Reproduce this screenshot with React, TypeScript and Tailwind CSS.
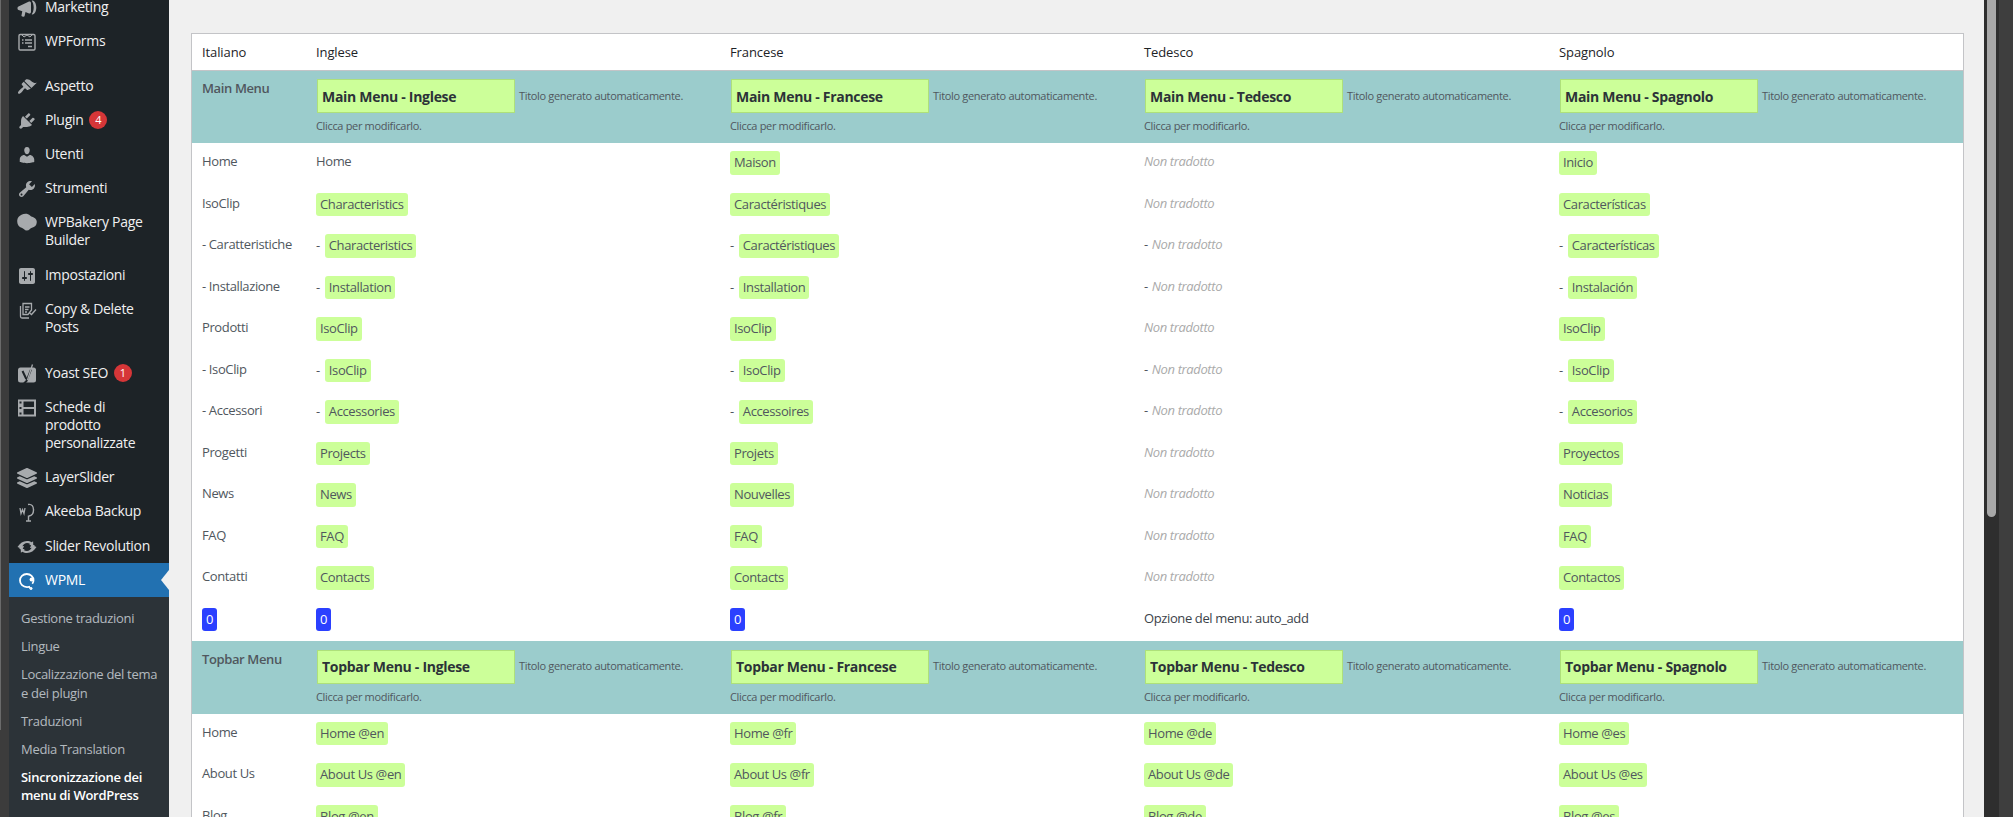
import React from "react";
import { FaLayerGroup } from "react-icons/fa";

const D: Record<string, string> = {
  appearance:
    "M14.48 11.06L7.41 3.99l1.5-1.5c.5-.56 2.3-.47 3.51.32 1.21.8 1.43 1.28 2.91 2.1 1.18.64 2.45 1.26 4.45.85zm-.71.71L6.7 4.7 4.93 6.47c-.39.39-.39 1.02 0 1.41l1.06 1.06c.39.39.39 1.03 0 1.42-.6.6-1.43 1.11-2.21 1.69-.35.26-.7.53-1.01.84-1.34 1.34-2.37 2.69-1.51 3.55s2.21-.17 3.55-1.51c.31-.31.58-.66.84-1.01.58-.78 1.09-1.61 1.69-2.21.39-.39 1.02-.39 1.41 0l1.06 1.06c.39.39 1.02.39 1.41 0z",
  plugin:
    "M13.11 4.36L9.87 7.6 8 5.73l3.24-3.24c.35-.34 1.05-.2 1.56.32.52.51.66 1.21.31 1.55zm-8 1.77l.91-1.12 9.01 9.01-1.19.84c-.71.71-2.63 1.16-3.82 1.16H6.14L4.9 17.26c-.59.59-1.54.59-2.12 0-.59-.58-.59-1.53 0-2.12l1.24-1.24v-3.88c0-1.13.4-3.19 1.09-3.89zm7.26 3.97l3.24-3.24c.34-.35 1.04-.21 1.55.31.52.51.66 1.21.31 1.55l-3.24 3.25z",
  users:
    "M10 9.25c-2.27 0-2.73-3.44-2.73-3.44C7 4.02 7.82 2 9.97 2c2.16 0 2.98 2.02 2.71 3.81 0 0-.41 3.44-2.68 3.44zm0 2.57L12.72 10c2.39 0 4.52 2.33 4.52 4.53v2.49s-3.65 1.13-7.24 1.13c-3.65 0-7.24-1.13-7.24-1.13v-2.49c0-2.25 1.94-4.48 4.47-4.48z",
  tools:
    "M16.68 9.77c-1.34 1.34-3.3 1.67-4.95.99l-5.41 6.52c-.99.99-2.59.99-3.58 0s-.99-2.59 0-3.57l6.52-5.42c-.68-1.65-.35-3.61.99-4.95 1.28-1.28 3.12-1.62 4.72-1.06l-2.89 2.89 2.82 2.82 2.86-2.87c.53 1.58.18 3.39-1.08 4.65zM3.81 16.21c.4.39 1.04.39 1.43 0 .4-.4.4-1.04 0-1.43-.39-.4-1.03-.4-1.43 0-.39.39-.39 1.03 0 1.43z",
  settings:
    "M18 16V4c0-1.1-.9-2-2-2H4c-1.1 0-2 .9-2 2v12c0 1.1.9 2 2 2h12c1.1 0 2-.9 2-2zM8 11h1c.55 0 1 .45 1 1s-.45 1-1 1H8v1.5c0 .28-.22.5-.5.5s-.5-.22-.5-.5V13H6c-.55 0-1-.45-1-1s.45-1 1-1h1V5.5c0-.28.22-.5.5-.5s.5.22.5.5V11zm5-2h-1c-.55 0-1-.45-1-1s.45-1 1-1h1V5.5c0-.28.22-.5.5-.5s.5.22.5.5V7h1c.55 0 1 .45 1 1s-.45 1-1 1h-1v5.5c0 .28-.22.5-.5.5s-.5-.22-.5-.5V9z",
  megaphone:
    "M1.500 8.500L12 3.500c1-.4 2 .3 2 1.400v9.200c0 1-1 1.800-2 1.400l-3.500-1.500-.9 4c-.1.500-.6.9-1.200.8l-1.200-.3c-.5-.1-.9-.7-.7-1.200l.8-4L1.500 12c-.6-.2-1-.7-1-1.400v-.7c0-.6.4-1.200 1-1.400zM15.500 2.500c1.900 0 3.800 3 3.800 7s-1.900 7-3.800 7c-.3 0-.6 0-.8-.2 1.100-1.300 2-3.900 2-6.800s-.9-5.500-2-6.800c.2-.2.5-.2.8-.2z",
  cloud:
    "M4.500 1.800c2-1 4.500-1.300 6.500-.6 1.700.6 2.400 1.900 4 2.500 2.400.8 4.800 2.300 4.800 5.300 0 3.300-2.200 5.200-4.800 5.700-1.800.4-2.600 2.800-5.300 2.800-2.300 0-3-2-5-2.700C2.500 14 .2 12.300.2 7.700.2 4.800 2.300 2.900 4.500 1.800z",
};

const Dash = ({ d, className = "" }: { d: string; className?: string }) => (
  <svg viewBox="0 0 20 20" className={"w-5 h-5 shrink-0 " + className} fill="currentColor">
    <path d={d} />
  </svg>
);

const WPFormsIcon = () => (
  <svg viewBox="0 0 20 20" className="w-5 h-5 shrink-0" fill="none" stroke="currentColor">
    <rect x="2" y="2.500" width="16" height="15.500" rx="1.200" strokeWidth="1.400" />
    <path d="M5 3l2 2 3-2 3 2 2-2" strokeWidth="1" />
    <path d="M5 8h1.500M8 8h7M5 11h1.500M8 11h7M11 14.500h4" strokeWidth="1.500" />
  </svg>
);
const CopyIcon = () => (
  <svg viewBox="0 0 20 20" className="w-5 h-5 shrink-0" fill="none" stroke="currentColor" strokeWidth="1.300">
    <path d="M6 3.500h8.500v6.500l-3.500 4.500H6z" />
    <path d="M3.500 6v10.500c0 1 .7 1.500 1.500 1.500h7" />
    <path d="M8 7h4.500M8 9.500h3.500M8 12h2" />
    <path d="M12.500 13l2 1.500 4.500-5" />
  </svg>
);
const YoastIcon = () => (
  <svg viewBox="0 0 20 20" className="w-5 h-5 shrink-0">
    <rect x="1" y="3.500" width="18" height="15" rx="2.500" fill="currentColor" />
    <path d="M5.500 7l3.800 8M14 5.500L9.500 17 7 19.500" fill="none" stroke="#1d2327" strokeWidth="2" />
    <path d="M15.500 0.500L10.500 16" fill="none" stroke="currentColor" strokeWidth="1.300" />
  </svg>
);
const FilmIcon = () => (
  <svg viewBox="0 0 20 20" className="w-5 h-5 shrink-0" fill="currentColor">
    <path
      fillRule="evenodd"
      d="M1 1.500h18v17H1zM6.500 3.500v5.500h10.500V3.500zM6.500 11v5.500h10.500V11zM2.500 3.500v2h2v-2zM2.500 9v2h2V9zM2.500 14.500v2h2v-2z"
    />
  </svg>
);
const AkeebaIcon = () => (
  <svg viewBox="0 0 20 20" className="w-5 h-5 shrink-0" fill="none" stroke="currentColor">
    <path d="M3 6l1 5.500 1.500-4 1.500 4 1-5.500" strokeWidth="1.300" />
    <path d="M11 2.500c4-.8 5.500 2 5.500 5.500s-1.500 5.500-4.500 6" strokeWidth="1.400" />
    <path d="M11.500 13.500V19M9 19h5" strokeWidth="1.400" />
  </svg>
);
const RevIcon = () => (
  <svg viewBox="0 0 20 20" className="w-5 h-5 shrink-0" fill="currentColor">
    <path d="M0.500 10C3 6.200 6 4 10 4c1.800 0 3.300.5 4.700 1.300l1.400-1.100.2 4.300-4.200-.5 1.200-1c-1-.6-2.100-.9-3.300-.9-2 0-3.800 1.300-4.600 3.200l1.700-.2L5 13.500 1.900 11l.9-.1zM19.500 10C17 13.800 14 16 10 16c-1.800 0-3.300-.5-4.700-1.300l-1.400 1.100-.2-4.300 4.200.5-1.200 1c1 .6 2.100.9 3.300.9 2 0 3.800-1.300 4.600-3.200l-1.700.2L15 6.500l3.100 2.500-.9.1z" />
  </svg>
);
const WpmlIcon = () => (
  <svg viewBox="0 0 20 20" className="w-5 h-5 shrink-0" fill="none" stroke="#fff" strokeWidth="1.800">
    <path d="M13 15.500c-1 .4-2 .6-3 .6-4 0-7-2.900-7-6.600C3 5.900 5.900 3 9.800 3c3.800 0 6.700 2.800 6.700 6.200 0 1.400-.4 2.600-1.200 3.600" />
    <circle cx="14.500" cy="8.500" r="1.900" fill="#fff" stroke="none" />
    <path d="M11.500 15.500c.8 1.500 2 2.300 3.500 1.800" strokeWidth="1.300" />
    <circle cx="14" cy="17.500" r="1.100" strokeWidth="1" />
  </svg>
);

type Item = { label: string; icon: React.ReactNode; badge?: string; after?: string };
const items: Item[] = [
  { label: "Marketing", icon: <Dash d={D.megaphone} /> },
  { label: "WPForms", icon: <WPFormsIcon />, after: "mb-[11px]" },
  { label: "Aspetto", icon: <Dash d={D.appearance} /> },
  { label: "Plugin", icon: <Dash d={D.plugin} />, badge: "4" },
  { label: "Utenti", icon: <Dash d={D.users} /> },
  { label: "Strumenti", icon: <Dash d={D.tools} /> },
  { label: "WPBakery Page Builder", icon: <Dash d={D.cloud} />, after: "mb-px" },
  { label: "Impostazioni", icon: <Dash d={D.settings} /> },
  { label: "Copy & Delete Posts", icon: <CopyIcon />, after: "mb-[12px]" },
  { label: "Yoast SEO", icon: <YoastIcon />, badge: "1" },
  { label: "Schede di prodotto personalizzate", icon: <FilmIcon /> },
  { label: "LayerSlider", icon: <FaLayerGroup className="w-5 h-5 shrink-0" /> },
  { label: "Akeeba Backup", icon: <AkeebaIcon />, after: "mb-px" },
  { label: "Slider Revolution", icon: <RevIcon /> },
];

const sub: { label: string; active?: boolean }[] = [
  { label: "Gestione traduzioni" },
  { label: "Lingue" },
  { label: "Localizzazione del tema e dei plugin" },
  { label: "Traduzioni" },
  { label: "Media Translation" },
  { label: "Sincronizzazione dei menu di WordPress", active: true },
];

const Sidebar = () => (
  <aside className="w-[160px] shrink-0 bg-[#1d2327] text-[14px] leading-[18px] tracking-[-0.3px] text-[#f0f0f1]">
    <ul className="-mt-[10px]">
      {items.map((it) => (
        <li key={it.label} className={it.after ?? ""}>
          <div className="flex py-2">
            <div className="w-9 h-[18px] shrink-0 flex justify-center items-start text-[#a7aaad]">
              {it.icon}
            </div>
            <div className="flex-1 pr-[12px] whitespace-normal">
              {it.label}
              {it.badge && (
                <span className="inline-flex items-center justify-center w-[18px] h-[18px] ml-[6px] rounded-full bg-[#d63638] text-white text-[11px] tracking-normal align-top">
                  {it.badge}
                </span>
              )}
            </div>
          </div>
        </li>
      ))}
      <li className="relative bg-[#2271b1] text-white">
        <div className="flex py-2">
          <div className="w-9 h-[18px] shrink-0 flex justify-center">
            <WpmlIcon />
          </div>
          <div>WPML</div>
        </div>
        <span className="absolute right-0 top-[7px] border-y-[10px] border-r-[8px] border-y-transparent border-r-[#f0f0f0]" />
      </li>
    </ul>
    <ul className="bg-[#2c3338] pt-[7px] pb-2 text-[13px] leading-[18.2px] text-[#f0f6fcb3]">
      {sub.map((s) => (
        <li
          key={s.label}
          className={"pl-3 pr-1 py-[5px] " + (s.active ? "font-semibold text-white" : "")}
        >
          {s.label}
        </li>
      ))}
    </ul>
  </aside>
);

const COLS = "grid grid-cols-[114px_414px_414px_415px_414px]";

const Chip = ({ children }: { children: React.ReactNode }) => (
  <span className="inline-block bg-[#ccff99] rounded-[3px] px-1 py-[2px] leading-[19.5px] text-[#50575e]">
    {children}
  </span>
);

const Trans = ({ text, dash }: { text: string | null | { plain: string }; dash?: boolean }) => {
  const isChip = typeof text === "string";
  let inner: React.ReactNode;
  if (text === null) inner = <em className="text-[#aaaaaa]">Non tradotto</em>;
  else if (typeof text === "object") inner = text.plain;
  else inner = <Chip>{text}</Chip>;
  return (
    <div className={"px-[10px] leading-[19.5px] h-[41.5px] " + (isChip ? "pt-2" : "pt-[9px]")}>
      {dash && <span className={text === null ? "mr-[4px]" : "mr-[5px]"}>-</span>}
      {inner}
    </div>
  );
};

type Row = {
  it: string;
  en: string | { plain: string };
  fr: string;
  de: string | null;
  es: string;
  dash?: boolean;
};

const Row = ({ r }: { r: Row }) => (
  <div className={COLS}>
    <div className="px-[10px] pt-[9px] leading-[19.5px] h-[41.5px]">
      {r.dash ? "- " : ""}
      {r.it}
    </div>
    <Trans text={r.en} dash={r.dash} />
    <Trans text={r.fr} dash={r.dash} />
    <Trans text={r.de} dash={r.dash} />
    <Trans text={r.es} dash={r.dash} />
  </div>
);

const Zero = () => (
  <span className="inline-block bg-[#2b40ff] text-white rounded-[3px] px-1 py-[2px] leading-[19.5px]">
    0
  </span>
);

const TitleCell = ({ value }: { value: string }) => (
  <div className="px-[10px] pt-[8.5px]">
    <div className="flex items-center gap-[4px] ml-px">
      <input
        readOnly
        value={value}
        className="w-[198px] h-[34px] px-[4px] bg-[#ccff99] border border-[#aee07a] text-[14px] font-bold text-[#2c3338] tracking-[-0.3px] outline-none"
      />
      <span className="text-[11px] tracking-[-0.33px] text-[#50575e] whitespace-nowrap">
        Titolo generato automaticamente.
      </span>
    </div>
    <p className="mt-[5px] text-[11px] leading-[16px] tracking-[-0.33px] text-[#50575e]">
      Clicca per modificarlo.
    </p>
  </div>
);

const Band = ({ name }: { name: string }) => (
  <div className={COLS + " bg-[#9bcccc] h-[72.5px]"}>
    <div className="px-[10px] pt-[8.5px] leading-[19.5px] font-semibold text-[#50575e]">{name}</div>
    <TitleCell value={name + " - Inglese"} />
    <TitleCell value={name + " - Francese"} />
    <TitleCell value={name + " - Tedesco"} />
    <TitleCell value={name + " - Spagnolo"} />
  </div>
);

const mainRows: Row[] = [
  { it: "Home", en: { plain: "Home" }, fr: "Maison", de: null, es: "Inicio" },
  { it: "IsoClip", en: "Characteristics", fr: "Caractéristiques", de: null, es: "Características" },
  { it: "Caratteristiche", en: "Characteristics", fr: "Caractéristiques", de: null, es: "Características", dash: true },
  { it: "Installazione", en: "Installation", fr: "Installation", de: null, es: "Instalación", dash: true },
  { it: "Prodotti", en: "IsoClip", fr: "IsoClip", de: null, es: "IsoClip" },
  { it: "IsoClip", en: "IsoClip", fr: "IsoClip", de: null, es: "IsoClip", dash: true },
  { it: "Accessori", en: "Accessories", fr: "Accessoires", de: null, es: "Accesorios", dash: true },
  { it: "Progetti", en: "Projects", fr: "Projets", de: null, es: "Proyectos" },
  { it: "News", en: "News", fr: "Nouvelles", de: null, es: "Noticias" },
  { it: "FAQ", en: "FAQ", fr: "FAQ", de: null, es: "FAQ" },
  { it: "Contatti", en: "Contacts", fr: "Contacts", de: null, es: "Contactos" },
];

const topRows: Row[] = [
  { it: "Home", en: "Home @en", fr: "Home @fr", de: "Home @de", es: "Home @es" },
  { it: "About Us", en: "About Us @en", fr: "About Us @fr", de: "About Us @de", es: "About Us @es" },
  { it: "Blog", en: "Blog @en", fr: "Blog @fr", de: "Blog @de", es: "Blog @es" },
];

export default function App() {
  return (
    <div
      className="flex h-[817px] w-[2013px] overflow-hidden bg-[#f0f0f0] text-[13px] text-[#50575e] tracking-[-0.38px]"
      style={{ fontFamily: '"Open Sans", "Noto Sans", sans-serif' }}
    >
      <div className="w-[9px] shrink-0 bg-[#3c3c3c]">
        <div className="w-px h-[730px] bg-[#6a6a6a]" />
      </div>
      <Sidebar />
      <main className="flex-1 min-w-0 pl-[22px] pr-[20px] pt-[33px]">
        <div className="border-x border-t border-[#c3c4c7] bg-white">
          <div className={COLS + " h-[36.5px] border-b border-[#c3c4c7] text-[#1d2327] tracking-[-0.1px] items-center"}>
            {["Italiano", "Inglese", "Francese", "Tedesco", "Spagnolo"].map((h) => (
              <div key={h} className="px-[10px] pt-px">
                {h}
              </div>
            ))}
          </div>
          <Band name="Main Menu" />
          {mainRows.map((r, i) => (
            <Row key={i} r={r} />
          ))}
          <div className={COLS}>
            <div className="px-[10px] pt-2 h-[41.5px]">
              <Zero />
            </div>
            <div className="px-[10px] pt-2">
              <Zero />
            </div>
            <div className="px-[10px] pt-2">
              <Zero />
            </div>
            <div className="px-[10px] pt-[9px] leading-[19.5px] text-[#3c434a]">Opzione del menu: auto_add</div>
            <div className="px-[10px] pt-2">
              <Zero />
            </div>
          </div>
          <Band name="Topbar Menu" />
          {topRows.map((r, i) => (
            <Row key={i} r={r} />
          ))}
        </div>
      </main>
      <div className="w-[15px] shrink-0 bg-[#2e2e2e] px-[3px]">
        <div className="h-[517px] bg-[#a8a8a8] rounded-b-[5px]" />
      </div>
      <div className="w-[14px] shrink-0 bg-[#3e3e3e]" />
    </div>
  );
}
